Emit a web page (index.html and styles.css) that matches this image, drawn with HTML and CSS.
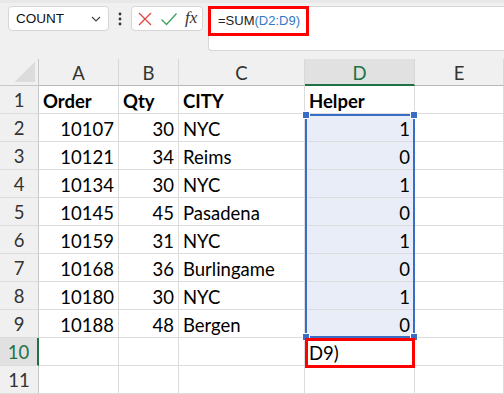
FILE: index.html
```html
<!DOCTYPE html>
<html lang="en">
<head>
    <meta charset="UTF-8">
    <meta name="viewport" content="width=device-width, initial-scale=1.0">
    <title>COUNT helper</title>
    <link rel="stylesheet" href="styles.css">
</head>
<body>
    <div class="toolbar">
        <div class="name-box">
            <span>COUNT</span>
            <svg class="chevron" width="12" height="8" viewBox="0 0 12 8"><path d="M2 2 L6 6 L10 2" fill="none" stroke="#444" stroke-width="1.2"/></svg>
        </div>
        <div class="dots">
            <svg width="4" height="14" viewBox="0 0 4 14"><circle cx="2" cy="2" r="1.4" fill="#333"/><circle cx="2" cy="7" r="1.4" fill="#333"/><circle cx="2" cy="12" r="1.4" fill="#333"/></svg>
        </div>
        <div class="icons">
            <svg width="16" height="16" viewBox="0 0 16 16"><path d="M2 2 L14 14 M14 2 L2 14" stroke="#e0443e" stroke-width="1.3" fill="none"/></svg>
            <svg width="18" height="16" viewBox="0 0 18 16"><path d="M1.5 8.5 L6.5 13.5 L16.5 2.5" stroke="#3aa35a" stroke-width="1.3" fill="none"/></svg>
            <span class="fx">fx</span>
        </div>
        <div class="formula">
            <span class="formula-text">=SUM<span class="ref">(D2:D9)</span></span>
        </div>
    </div>

    <div class="sheet">
        <div class="corner"><div class="triangle"></div></div>
        <div class="col-head">A</div>
        <div class="col-head">B</div>
        <div class="col-head">C</div>
        <div class="col-head active">D</div>
        <div class="col-head">E</div>

        <div class="row-head">1</div>
        <div class="cell bold">Order</div>
        <div class="cell bold">Qty</div>
        <div class="cell bold">CITY</div>
        <div class="cell bold">Helper</div>
        <div class="cell"></div>

        <div class="row-head">2</div>
        <div class="cell num">10107</div>
        <div class="cell num">30</div>
        <div class="cell">NYC</div>
        <div class="cell num sel">1</div>
        <div class="cell"></div>

        <div class="row-head">3</div>
        <div class="cell num">10121</div>
        <div class="cell num">34</div>
        <div class="cell">Reims</div>
        <div class="cell num sel">0</div>
        <div class="cell"></div>

        <div class="row-head">4</div>
        <div class="cell num">10134</div>
        <div class="cell num">30</div>
        <div class="cell">NYC</div>
        <div class="cell num sel">1</div>
        <div class="cell"></div>

        <div class="row-head">5</div>
        <div class="cell num">10145</div>
        <div class="cell num">45</div>
        <div class="cell">Pasadena</div>
        <div class="cell num sel">0</div>
        <div class="cell"></div>

        <div class="row-head">6</div>
        <div class="cell num">10159</div>
        <div class="cell num">31</div>
        <div class="cell">NYC</div>
        <div class="cell num sel">1</div>
        <div class="cell"></div>

        <div class="row-head">7</div>
        <div class="cell num">10168</div>
        <div class="cell num">36</div>
        <div class="cell">Burlingame</div>
        <div class="cell num sel">0</div>
        <div class="cell"></div>

        <div class="row-head">8</div>
        <div class="cell num">10180</div>
        <div class="cell num">30</div>
        <div class="cell">NYC</div>
        <div class="cell num sel">1</div>
        <div class="cell"></div>

        <div class="row-head">9</div>
        <div class="cell num">10188</div>
        <div class="cell num">48</div>
        <div class="cell">Bergen</div>
        <div class="cell num sel">0</div>
        <div class="cell"></div>

        <div class="row-head active">10</div>
        <div class="cell"></div>
        <div class="cell"></div>
        <div class="cell"></div>
        <div class="cell edit">D9)</div>
        <div class="cell"></div>

        <div class="row-head">11</div>
        <div class="cell"></div>
        <div class="cell"></div>
        <div class="cell"></div>
        <div class="cell"></div>
        <div class="cell"></div>

        <div class="selection">
            <span class="handle tl"></span>
            <span class="handle tr"></span>
            <span class="handle bl"></span>
            <span class="handle br"></span>
        </div>
        <div class="edit-box"></div>
    </div>
</body>
</html>
```

FILE: styles.css
```css
body {
    margin: 0;
    padding: 0;
    width: 504px;
    height: 394px;
    overflow: hidden;
    background-color: #ffffff;
    font-family: Lato, "Liberation Sans", sans-serif;
}

.toolbar {
    height: 59px;
    box-sizing: border-box;
    background-color: #f0f0f0;
    border-top: 3px solid #e8e8e8;
    padding: 3px 0 0 8px;
    display: flex;
    align-items: flex-start;
    font-family: "Liberation Sans", Arial, sans-serif;
}

.name-box {
    width: 101px;
    height: 25px;
    box-sizing: border-box;
    background: #ffffff;
    border: 1px solid #d6d6d6;
    border-radius: 4px;
    display: flex;
    align-items: center;
    justify-content: space-between;
    padding: 0 6px 0 7px;
    font-size: 13.5px;
    color: #111;
}

.dots {
    width: 22px;
    height: 25px;
    display: flex;
    align-items: center;
    justify-content: center;
}

.icons {
    width: 72px;
    height: 25px;
    box-sizing: border-box;
    background: #ffffff;
    border: 1px solid #d6d6d6;
    border-radius: 4px;
    display: flex;
    align-items: center;
    gap: 7px;
    padding-left: 5px;
}

.fx {
    font-family: "Liberation Serif", serif;
    font-style: italic;
    font-size: 17px;
    color: #333;
    margin-top: -2px;
}

.formula {
    margin-left: 5px;
    flex: 1;
    height: 45px;
    box-sizing: border-box;
    background: #ffffff;
    border: 1px solid #d6d6d6;
    border-right: none;
    border-radius: 4px 0 0 4px;
    position: relative;
}

.formula-text {
    position: absolute;
    left: -1px;
    top: -1px;
    width: 101px;
    height: 30px;
    box-sizing: border-box;
    border: 3px solid #ff0000;
    padding: 4px 0 0 7px;
    font-size: 13px;
    color: #222;
}

.ref {
    color: #3579c6;
}

.sheet {
    position: relative;
    display: grid;
    grid-template-columns: 39px 80px 60px 126px 110px 1fr;
    grid-template-rows: 27px repeat(11, 28px);
}

.corner {
    background: #f0f0f0;
    border-right: 1px solid #c8c8c8;
    border-bottom: 1px solid #c8c8c8;
    position: relative;
}

.triangle {
    position: absolute;
    right: 3px;
    bottom: 3px;
    width: 20px;
    height: 20px;
    background: linear-gradient(to bottom right, transparent 50%, #dcdcdc 50%);
}

.col-head {
    background: #f0f0f0;
    border-right: 1px solid #d8d8d8;
    border-bottom: 1px solid #b8b8b8;
    text-align: center;
    font-size: 18.5px;
    line-height: 28px;
    color: #333;
}

.col-head.active {
    background: #e1e1e1;
    color: #1e7145;
    border-bottom: 2px solid #1e7145;
}

.row-head {
    background: #f0f0f0;
    border-right: 1px solid #c8c8c8;
    border-bottom: 1px solid #dcdcdc;
    text-align: center;
    font-size: 18.5px;
    line-height: 29px;
    color: #333;
}

.row-head.active {
    background: #e1e1e1;
    color: #1e7145;
    border-right: 2px solid #1e7145;
}

.cell {
    border-right: 1px solid #dcdcdc;
    border-bottom: 1px solid #dcdcdc;
    font-size: 18.5px;
    line-height: 30px;
    padding: 0 4px;
    color: #000;
    white-space: nowrap;
}

.cell.bold {
    font-weight: bold;
}

.cell.num {
    text-align: right;
}

.cell.sel {
    background: #e8edf7;
}

.selection {
    position: absolute;
    left: 305px;
    top: 55px;
    width: 110px;
    height: 224px;
    box-sizing: border-box;
    border: 2px solid #3a6ec6;
}

.handle {
    position: absolute;
    width: 6px;
    height: 6px;
    background: #3a6ec6;
    border: 1px solid #ffffff;
}

.tl { left: -5px; top: -5px; }
.tr { right: -5px; top: -5px; }
.bl { left: -5px; bottom: -5px; }
.br { right: -5px; bottom: -5px; }

.edit-box {
    position: absolute;
    left: 305px;
    top: 279px;
    width: 110px;
    height: 30px;
    box-sizing: border-box;
    border: 3px solid #ff0000;
}
```
